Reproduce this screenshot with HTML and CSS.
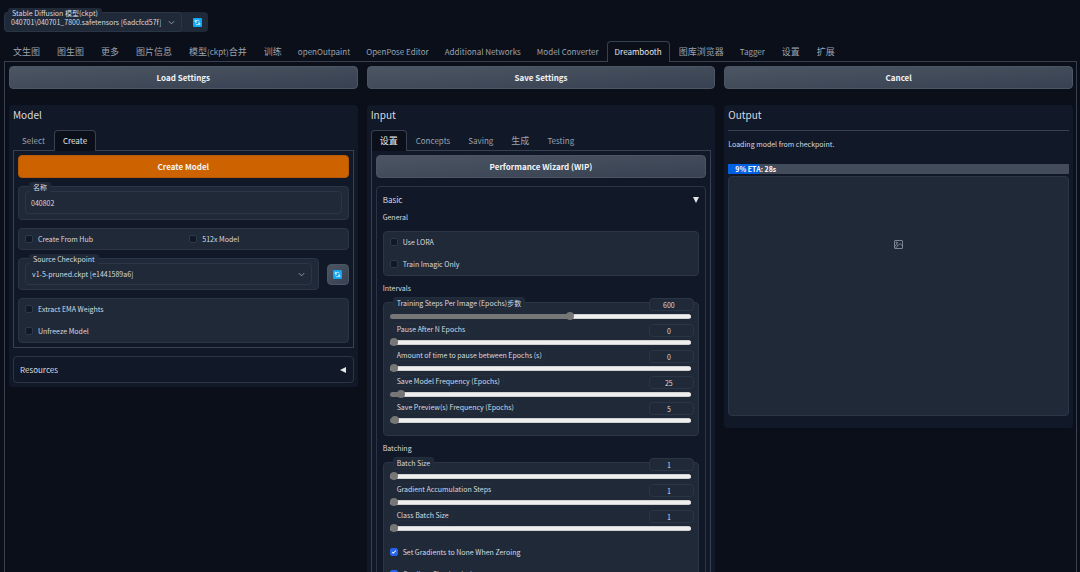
FILE: index.html
```html
<!DOCTYPE html>
<html lang="zh-CN">
<head>
<meta charset="utf-8">
<meta name="viewport" content="width=device-width, initial-scale=1">
<title>Stable Diffusion</title>
<link rel="stylesheet" href="styles.css">
</head>
<body>
<svg class="sprites" aria-hidden="true">
  <symbol id="refresh" viewBox="0 0 18 18">
    <rect x="0" y="0" width="18" height="18" rx="2" fill="#0ea5f5"/>
    <path d="M4.500 3.500v4.500H8M5 7.500A4.500 4.500 0 0 1 13 6.500M13.500 14.500V10H10M13 10.500A4.500 4.500 0 0 1 5 11.500" fill="none" stroke="#e6f6ff" stroke-width="1.800"/>
  </symbol>
  <symbol id="chevron" viewBox="0 0 10 10">
    <path d="M2 3.500L5 6.500l3-3" fill="none" stroke="#9ca3af" stroke-width="1"/>
  </symbol>
</svg>

<header class="quick">
  <div class="quick-field">
    <label class="tag quick-tag" for="ckpt">Stable Diffusion 模型(ckpt)</label>
    <select id="ckpt" class="select"><option>040701\040701_7800.safetensors [6adcfcd57f]</option></select>
    <svg class="chevron"><use href="#chevron"/></svg>
  </div>
  <button class="quick-refresh" aria-label="Refresh"><svg class="refresh"><use href="#refresh"/></svg></button>
</header>

<nav class="tabs main-tabs">
  <button class="tab zh">文生图</button>
  <button class="tab zh">图生图</button>
  <button class="tab zh">更多</button>
  <button class="tab zh">图片信息</button>
  <button class="tab zh">模型<span class="latin">(ckpt)</span>合并</button>
  <button class="tab zh">训练</button>
  <button class="tab">openOutpaint</button>
  <button class="tab">OpenPose Editor</button>
  <button class="tab">Additional Networks</button>
  <button class="tab">Model Converter</button>
  <button class="tab active">Dreambooth</button>
  <button class="tab zh">图库浏览器</button>
  <button class="tab">Tagger</button>
  <button class="tab zh">设置</button>
  <button class="tab zh">扩展</button>
</nav>

<main class="page">
  <div class="columns">
    <button class="btn">Load Settings</button>
    <button class="btn">Save Settings</button>
    <button class="btn">Cancel</button>
  </div>

  <div class="columns panels">
    <section class="panel">
      <h2 class="title">Model</h2>
      <div class="tabs">
        <button class="tab">Select</button>
        <button class="tab active">Create</button>
      </div>
      <div class="tab-body">
        <button class="btn primary">Create Model</button>
        <div class="group field">
          <label class="tag" for="name">名称</label>
          <input id="name" class="text" type="text" value="040802">
        </div>
        <div class="group checks two">
          <label class="check"><input type="checkbox">Create From Hub</label>
          <label class="check"><input type="checkbox">512x Model</label>
        </div>
        <div class="source">
          <div class="group field">
            <label class="tag" for="source">Source Checkpoint</label>
            <select id="source" class="select boxed"><option>v1-5-pruned.ckpt [e1441589a6]</option></select>
            <svg class="chevron"><use href="#chevron"/></svg>
          </div>
          <button class="btn square" aria-label="Refresh checkpoints"><svg class="refresh"><use href="#refresh"/></svg></button>
        </div>
        <div class="group checks">
          <label class="check"><input type="checkbox">Extract EMA Weights</label>
          <label class="check"><input type="checkbox">Unfreeze Model</label>
        </div>
      </div>
      <button class="accordion-head resources">Resources<svg class="arrow" viewBox="0 0 6 6"><path d="M6 0v6L0 3z"/></svg></button>
    </section>

    <section class="panel">
      <h2 class="title">Input</h2>
      <div class="tabs">
        <button class="tab zh active">设置</button>
        <button class="tab">Concepts</button>
        <button class="tab">Saving</button>
        <button class="tab zh">生成</button>
        <button class="tab">Testing</button>
      </div>
      <div class="tab-body">
        <button class="btn">Performance Wizard (WIP)</button>
        <div class="accordion">
          <button class="accordion-head">Basic<svg class="arrow" viewBox="0 0 6 6"><path d="M0 0h6L3 6z"/></svg></button>
          <h3 class="subtitle">General</h3>
          <div class="group checks">
            <label class="check"><input type="checkbox">Use LORA</label>
            <label class="check"><input type="checkbox">Train Imagic Only</label>
          </div>
          <h3 class="subtitle">Intervals</h3>
          <div class="group sliders">
            <div class="slider">
              <label for="s1">Training Steps Per Image (Epochs)步数</label>
              <input type="number" value="600" aria-label="Training steps value">
              <input id="s1" type="range" min="0" max="1000" value="600" style="--fill:60%">
            </div>
            <div class="slider">
              <label for="s2">Pause After N Epochs</label>
              <input type="number" value="0" aria-label="Pause after value">
              <input id="s2" type="range" min="0" max="1000" value="0" style="--fill:0%">
            </div>
            <div class="slider">
              <label for="s3">Amount of time to pause between Epochs (s)</label>
              <input type="number" value="0" aria-label="Pause time value">
              <input id="s3" type="range" min="0" max="1000" value="0" style="--fill:0%">
            </div>
            <div class="slider">
              <label for="s4">Save Model Frequency (Epochs)</label>
              <input type="number" value="25" aria-label="Save model value">
              <input id="s4" type="range" min="0" max="1000" value="25" style="--fill:3%">
            </div>
            <div class="slider">
              <label for="s5">Save Preview(s) Frequency (Epochs)</label>
              <input type="number" value="5" aria-label="Save previews value">
              <input id="s5" type="range" min="0" max="1000" value="5" style="--fill:1%">
            </div>
          </div>
          <h3 class="subtitle">Batching</h3>
          <div class="group sliders">
            <div class="slider">
              <label for="s6">Batch Size</label>
              <input type="number" value="1" aria-label="Batch size value">
              <input id="s6" type="range" min="1" max="100" value="1" style="--fill:0%">
            </div>
            <div class="slider">
              <label for="s7">Gradient Accumulation Steps</label>
              <input type="number" value="1" aria-label="Accumulation steps value">
              <input id="s7" type="range" min="1" max="100" value="1" style="--fill:0%">
            </div>
            <div class="slider">
              <label for="s8">Class Batch Size</label>
              <input type="number" value="1" aria-label="Class batch size value">
              <input id="s8" type="range" min="1" max="100" value="1" style="--fill:0%">
            </div>
            <div class="slider-checks">
              <label class="check"><input type="checkbox" checked>Set Gradients to None When Zeroing</label>
              <label class="check"><input type="checkbox" checked>Gradient Checkpointing</label>
            </div>
          </div>
        </div>
      </div>
    </section>

    <section class="panel output">
      <h2 class="title">Output</h2>
      <hr class="rule">
      <p class="status">Loading model from checkpoint.</p>
      <div class="progress"><div class="progress-fill" style="width:9%">9% ETA: 28s</div></div>
      <div class="gallery">
        <svg class="image-icon" viewBox="0 0 18 18" fill="none" stroke="#9ca3af" stroke-width="1.500">
          <rect x="1" y="1" width="16" height="16" rx="1"/>
          <circle cx="5.500" cy="5.500" r="1.500"/>
          <path d="M3 16L12 7l5 5M8 11l-3-2-4 4"/>
        </svg>
      </div>
    </section>
  </div>
</main>
</body>
</html>
```

FILE: styles.css
```css
:root {
  --bg: #0b0f19;
  --panel: #111827;
  --group: #1f2937;
  --line: #374151;
  --soft: #2a3646;
  --text: #d8dbe0;
  --muted: #9ca3af;
}

* { box-sizing: border-box; }

body {
  margin: 0;
  padding: 12px 3px 0 4px;
  height: 100vh;
  overflow: hidden;
  background: var(--bg);
  color: var(--text);
  font: 7px/10px "Noto Sans CJK SC", "Noto Sans", sans-serif;
}

button, input, select {
  margin: 0;
  padding: 0;
  border: 0;
  background: none;
  color: inherit;
  font: inherit;
}

.sprites { position: absolute; width: 0; height: 0; }
.refresh { display: block; width: 9px; height: 9px; }

/* Checkpoint picker */
.quick {
  display: flex;
  width: 204px;
  height: 20px;
  border-radius: 4px;
  background: var(--group);
}
.quick-field {
  position: relative;
  flex: 1;
  border: 1px solid var(--soft);
  border-radius: 4px;
}
.quick-refresh {
  display: flex;
  align-items: center;
  justify-content: center;
  width: 26px;
  padding-left: 4px;
}

.select {
  display: block;
  appearance: none;
  width: 100%;
  height: 18px;
  padding: 0 20px 0 6px;
}
.select.boxed {
  height: 22px;
  border: 1px solid var(--soft);
  border-radius: 4px;
}
.chevron {
  position: absolute;
  right: 5px;
  top: 5px;
  width: 9px;
  height: 9px;
  pointer-events: none;
}
.field .chevron { right: 12px; top: 11px; }

.tag {
  position: absolute;
  left: 10px;
  top: -5px;
  padding: 0 4px;
  border-radius: 3px;
  background: var(--group);
}
.quick-tag { left: 3px; z-index: 1; }

/* Tabs */
.tabs {
  display: flex;
  border-bottom: 1px solid var(--line);
}
.tab {
  height: 21px;
  margin-bottom: -1px;
  padding: 0 8px;
  border: 1px solid transparent;
  border-bottom: 0;
  border-radius: 4px 4px 0 0;
  color: var(--muted);
  font-size: 8px;
  white-space: nowrap;
}
.tab.zh { font-size: 9px; }
.latin { font-size: 8px; }
.tab.active {
  border-color: var(--line);
  background: var(--bg);
  color: #e5e7eb;
}
.main-tabs { margin-top: 9px; }
.main-tabs .tab { padding: 0 7px; }
.main-tabs .tab.zh { padding: 0 7px 0 8px; }

.page {
  padding: 4px 3px 4px 4px;
  border: 1px solid var(--line);
  border-top: 0;
}
.columns {
  display: grid;
  grid-template-columns: repeat(3, minmax(0, 1fr));
  gap: 9px;
  align-items: start;
}
.panels { margin-top: 16px; }

.btn {
  height: 23px;
  border: 1px solid #4b5563;
  border-radius: 4px;
  background: linear-gradient(to bottom right, #4b5563, #374151);
  color: #f3f4f6;
  font-size: 8px;
  font-weight: 700;
}
.btn.primary { border-color: #b45a0a; background: #cc6300; }
.btn.square {
  display: flex;
  align-items: center;
  justify-content: center;
  width: 22px;
  height: 21px;
}

/* Panels */
.panel {
  padding: 4px;
  border-radius: 4px;
  background: var(--panel);
}
.title {
  margin: 0 0 9px;
  font-size: 10px;
  line-height: 12px;
  font-weight: 400;
}
.tab-body {
  display: flex;
  flex-direction: column;
  gap: 8px;
  padding: 4px;
  border: 1px solid var(--line);
  border-top: 0;
}
.group {
  border: 1px solid var(--soft);
  border-radius: 4px;
  background: var(--group);
}
.field { position: relative; padding: 4px 6px; }
.text {
  display: block;
  width: 100%;
  height: 23px;
  margin-bottom: 1px;
  padding: 0 5px;
  border: 1px solid var(--soft);
  border-radius: 4px;
}
.source { display: flex; align-items: center; gap: 8px; }
.source .field { flex: 1; }

.checks {
  display: grid;
  gap: 12px;
  padding: 5px 6px 6px;
}
.checks.two { grid-template-columns: 1fr 1fr; padding-bottom: 5px; }
.check { display: flex; align-items: center; gap: 5px; }
.check input {
  appearance: none;
  width: 8px;
  height: 8px;
  border: 1px solid #2d3949;
  border-radius: 2px;
  background: var(--panel);
}
.check input:checked {
  border-color: #2563eb;
  background: #2563eb url("data:image/svg+xml,%3Csvg xmlns='http://www.w3.org/2000/svg' viewBox='0 0 16 16' fill='white'%3E%3Cpath d='M12.200 4.800a1 1 0 0 1 0 1.400l-5 5a1 1 0 0 1-1.400 0l-2-2a1 1 0 0 1 1.400-1.400L6.500 9.100l4.300-4.300a1 1 0 0 1 1.400 0z'/%3E%3C/svg%3E") center / 8px 8px no-repeat;
}

/* Accordions */
.accordion {
  padding: 0 6px 6px;
  border: 1px solid var(--soft);
  border-radius: 4px;
}
.accordion-head {
  display: flex;
  align-items: center;
  justify-content: space-between;
  width: 100%;
  height: 25px;
  font-size: 8px;
}
.resources {
  height: 27px;
  margin-top: 8px;
  padding: 0 7px 0 6px;
  border: 1px solid var(--soft);
  border-radius: 4px;
}
.arrow { width: 6px; height: 6px; fill: #e5e7eb; }
.subtitle {
  margin: 0;
  font-size: 7px;
  line-height: 10px;
  font-weight: 400;
}
.subtitle + .group { margin-top: 9px; }
.group + .subtitle { margin-top: 7px; }

/* Sliders */
.sliders { padding: 0 7px 11px 6px; }
.slider {
  display: grid;
  grid-template-columns: 1fr auto;
  grid-template-rows: 15px 8px;
  align-items: center;
  margin-bottom: 3px;
}
.slider:first-child { margin-top: -6px; }
.slider:last-child { margin-bottom: 0; }
.slider label {
  align-self: start;
  justify-self: start;
  margin-left: 3px;
  padding: 0 3px;
  border: 1px solid #232e3d;
  border-radius: 3px;
  background: var(--group);
}
.slider input[type="number"] {
  appearance: textfield;
  width: 45px;
  height: 13px;
  margin-right: -3px;
  padding-right: 6px;
  border: 1px solid var(--soft);
  border-radius: 4px;
  background: var(--group);
  text-align: center;
}
.slider input::-webkit-inner-spin-button { appearance: none; display: none; }
.slider input[type="range"] {
  grid-column: 1 / -1;
  appearance: none;
  width: 100%;
  height: 8px;
}
.slider input::-webkit-slider-runnable-track {
  height: 5px;
  border-radius: 3px;
  background: linear-gradient(to right, #767676 var(--fill), transparent var(--fill)), linear-gradient(#b2b2b2, #efefef 1px, #efefef 4px, #b2b2b2);
}
.slider input::-webkit-slider-thumb {
  appearance: none;
  width: 8px;
  height: 8px;
  margin-top: -2px;
  border-radius: 50%;
  background: #767676;
}
.slider-checks { display: grid; gap: 12px; padding-top: 12px; }

/* Output */
.output { padding-bottom: 12px; }
.rule { margin: 0; border: 0; border-top: 1px solid var(--line); }
.status { margin: 8px 0 15px; }
.progress { height: 10px; border-radius: 1px; background: #434c5a; }
.progress-fill {
  height: 10px;
  padding-left: 7px;
  border-radius: 1px;
  background: #0060df;
  color: #fff;
  font-weight: 700;
  white-space: nowrap;
}
.gallery {
  display: flex;
  justify-content: center;
  min-height: 240px;
  margin-top: 2px;
  padding-top: 63px;
  border: 1px solid var(--soft);
  border-radius: 4px;
  background: var(--group);
}
.image-icon { width: 9px; height: 9px; }
```
